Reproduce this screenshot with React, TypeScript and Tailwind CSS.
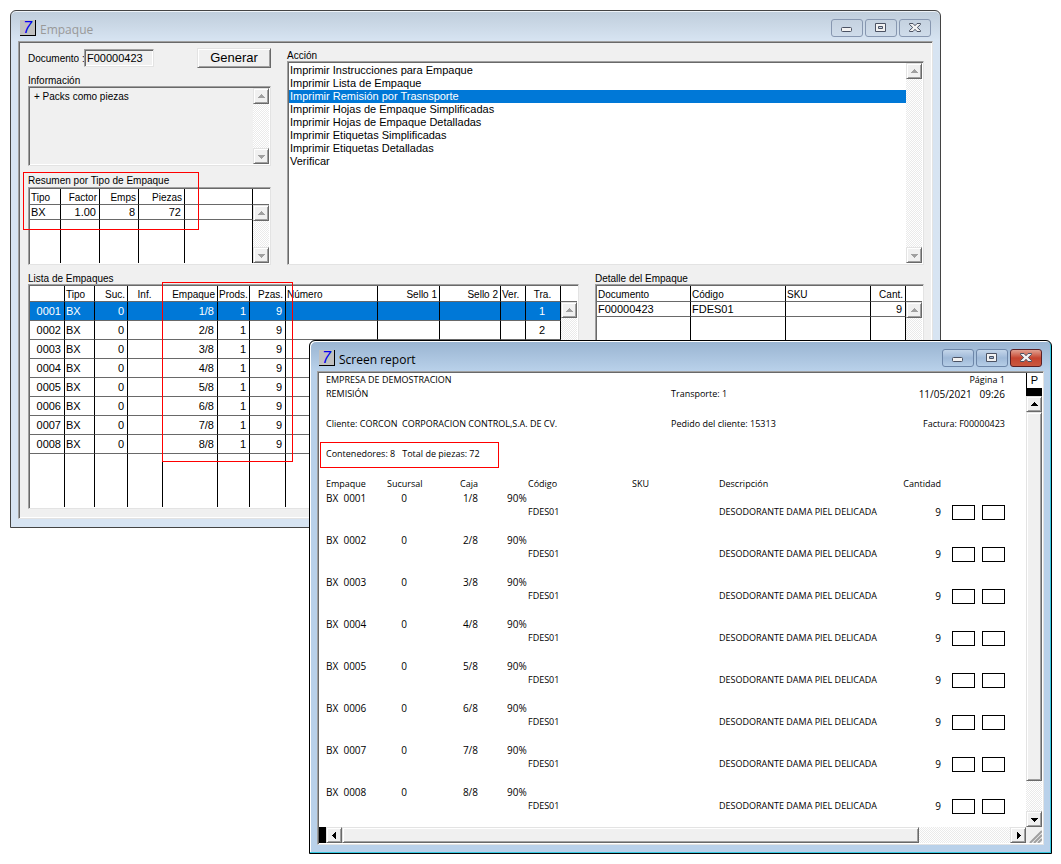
import type { ReactNode } from 'react'
import clsx from 'clsx'

const ACTIONS = [
  'Imprimir Instrucciones para Empaque',
  'Imprimir Lista de Empaque',
  'Imprimir Remisión por Trasnsporte',
  'Imprimir Hojas de Empaque Simplificadas',
  'Imprimir Hojas de Empaque Detalladas',
  'Imprimir Etiquetas Simplificadas',
  'Imprimir Etiquetas Detalladas',
  'Verificar',
]

const PACKS = [1, 2, 3, 4, 5, 6, 7, 8]

const SUNKEN =
  'border border-t-[#a0a0a0] border-l-[#a0a0a0] border-r-[#e3e3e3] border-b-[#e3e3e3] p-px shadow-[inset_1px_1px_#696969,inset_-1px_-1px_#ffffff]'
const RAISED =
  'border border-t-[#e3e3e3] border-l-[#e3e3e3] border-r-[#696969] border-b-[#696969] bg-[#f0f0f0] shadow-[inset_1px_1px_#ffffff,inset_-1px_-1px_#a0a0a0]'
const TRACK = 'bg-[repeating-conic-gradient(#ffffff_0_25%,#eaeaea_0_50%)] bg-[length:2px_2px]'

const ARROWS = {
  up: 'M4 9h7v-1h-1v-1h-1v-1h-1v-1h-1v1h-1v1h-1v1h-1z',
  down: 'M4 6h7v1h-1v1h-1v1h-1v1h-1v-1h-1v-1h-1v-1h-1z',
  left: 'M9 4v7h-1v-1h-1v-1h-1v-1h-1v-1h1v-1h1v-1h1v-1z',
  right: 'M6 4v7h1v-1h1v-1h1v-1h1v-1h-1v-1h-1v-1h-1v-1z',
}

function ArrowButton({ dir, disabled = false }: { dir: keyof typeof ARROWS; disabled?: boolean }) {
  return (
    <button
      type="button"
      aria-label={dir}
      disabled={disabled}
      className={clsx('flex size-4 shrink-0 items-center justify-center', RAISED)}
    >
      <svg
        viewBox="0 0 15 15"
        shapeRendering="crispEdges"
        className={clsx('size-[15px] shrink-0', disabled ? 'fill-[#a0a0a0]' : 'fill-black')}
      >
        <path d={ARROWS[dir]} />
      </svg>
    </button>
  )
}

function DisabledScroll() {
  return (
    <div className={clsx('flex h-full w-4 flex-col justify-between', TRACK)}>
      <ArrowButton dir="up" disabled />
      <ArrowButton dir="down" disabled />
    </div>
  )
}

function TitleButton({ kind, active }: { kind: 'min' | 'max' | 'close'; active: boolean }) {
  return (
    <button
      type="button"
      aria-label={kind}
      className={clsx(
        'flex h-[18px] w-8 items-start justify-center rounded-[3px] border pt-[2px]',
        active && kind === 'close'
          ? 'border-[#5b1f24] bg-linear-to-b from-[#e0a090] via-[#c5442f] to-[#c9583f]'
          : active
            ? 'border-[#6d86a8] bg-linear-to-b from-[#c4d6ea] via-[#9fb9d8] to-[#b5cde6]'
            : 'border-[#8797b0] bg-linear-to-b from-[#c5d2e0] to-[#cfdcea]',
      )}
    >
      <svg viewBox="0 0 14 12" className="h-3 w-[14px]" fill="#f2f2f2" stroke="#4b5263">
        {kind === 'min' && <rect x="1.5" y="5.5" width="10" height="4" rx="1" />}
        {kind === 'max' && <path fillRule="evenodd" d="M1.5 1.5h10v8h-10z M4.5 4.5h4v2h-4z" />}
        {kind === 'close' && (
          <path d="M1.5 1.5h3.5l2 2.2l2-2.2h3.5v1l-3.2 3l3.2 3v1h-3.5l-2-2.2l-2 2.2h-3.5v-1l3.2-3l-3.2-3z" />
        )}
      </svg>
    </button>
  )
}

type WindowProps = {
  title: string
  active?: boolean
  className: string
  children: ReactNode
}

function AppWindow({ title, active = false, className, children }: WindowProps) {
  return (
    <section
      className={clsx(
        'absolute rounded-t-md border px-[7px] pb-2',
        active
          ? 'border-black bg-[#b9d1ea] bg-linear-to-b from-[#99b4d1] from-0% to-[#b9d1ea] to-[30px] shadow-[inset_-1px_-1px_#35c8e0,inset_1px_1px_#ffffff]'
          : 'border-[#434343] bg-[#d7e4f2] bg-linear-to-b from-[#bfcddb] from-0% to-[#d7e4f2] to-[30px] shadow-[inset_0_1px_#eef3f8]',
        className,
      )}
    >
      <header className="flex h-[30px] items-center pt-1 pr-0.5 pl-0.5">
        <span className="flex size-4 items-center justify-center border-r border-b border-black bg-[#c0c0c0] font-['Liberation_Sans',sans-serif] text-base leading-4 text-[#0000f0] italic">
          7
        </span>
        <h1
          className={clsx(
            "ml-1 flex-1 pt-[3px] font-['Open_Sans',sans-serif] text-xs",
            active ? 'text-black' : 'text-[#999999]',
          )}
        >
          {title}
        </h1>
        <div className="flex gap-0.5">
          <TitleButton kind="min" active={active} />
          <TitleButton kind="max" active={active} />
          <TitleButton kind="close" active={active} />
        </div>
      </header>
      {children}
    </section>
  )
}

const HEAD =
  'h-4 border-r border-b border-r-black border-b-[#696969] pt-0.5 pr-0.5 pb-0 pl-px font-normal'
const CELL = 'border-r border-b border-r-black border-b-[#696969] py-0 pr-[3px] pl-px'
const FILL = 'border-r border-black'

function ResumenTable() {
  return (
    <table className="w-full table-fixed border-separate border-spacing-0 bg-white text-left leading-3">
      <colgroup>
        <col className="w-[31px]" />
        <col className="w-[39px]" />
        <col className="w-[39px]" />
        <col className="w-[46px]" />
        <col />
        <col className="w-4" />
      </colgroup>
      <thead className="text-[10px]">
        <tr>
          <th className={HEAD}>Tipo</th>
          <th className={clsx(HEAD, 'text-right')}>Factor</th>
          <th className={clsx(HEAD, 'text-right')}>Emps</th>
          <th className={clsx(HEAD, 'text-right')}>Piezas</th>
          <th className={HEAD} />
          <th className="border-b border-[#696969]" />
        </tr>
      </thead>
      <tbody className="text-[11px]">
        <tr className="h-[15px]">
          <td className={CELL}>BX</td>
          <td className={clsx(CELL, 'text-right')}>1.00</td>
          <td className={clsx(CELL, 'text-right')}>8</td>
          <td className={clsx(CELL, 'text-right')}>72</td>
          <td className={CELL} />
          <td rowSpan={2} className="p-0">
            <div className="h-[58px]">
              <DisabledScroll />
            </div>
          </td>
        </tr>
        <tr className="h-[43px]">
          <td className={FILL} />
          <td className={FILL} />
          <td className={FILL} />
          <td className={FILL} />
          <td className={FILL} />
        </tr>
      </tbody>
    </table>
  )
}

function ListaTable() {
  return (
    <table className="w-full table-fixed border-separate border-spacing-0 bg-white text-left leading-3">
      <colgroup>
        <col className="w-[35px]" />
        <col className="w-[30px]" />
        <col className="w-[33px]" />
        <col className="w-[35px]" />
        <col className="w-[55px]" />
        <col className="w-8" />
        <col className="w-9" />
        <col />
        <col className="w-[62px]" />
        <col className="w-[61px]" />
        <col className="w-[25px]" />
        <col className="w-[35px]" />
        <col className="w-4" />
      </colgroup>
      <thead className="text-[10px]">
        <tr>
          <th className={HEAD} />
          <th className={HEAD}>Tipo</th>
          <th className={clsx(HEAD, 'text-right')}>Suc.</th>
          <th className={clsx(HEAD, 'text-center')}>Inf.</th>
          <th className={clsx(HEAD, 'text-right')}>Empaque</th>
          <th className={HEAD}>Prods.</th>
          <th className={clsx(HEAD, 'text-right')}>Pzas.</th>
          <th className={HEAD}>Número</th>
          <th className={clsx(HEAD, 'text-right')}>Sello 1</th>
          <th className={clsx(HEAD, 'text-right')}>Sello 2</th>
          <th className={HEAD}>Ver.</th>
          <th className={clsx(HEAD, 'text-center')}>Tra.</th>
          <th className="border-b border-[#696969]" />
        </tr>
      </thead>
      <tbody className="text-[11px]">
        {PACKS.map((n) => (
          <tr key={n} className={clsx('h-[19px]', n === 1 && 'bg-[#0078d7] text-white')}>
            <td className={clsx(CELL, 'text-right')}>{`000${n}`}</td>
            <td className={CELL}>BX</td>
            <td className={clsx(CELL, 'text-right')}>0</td>
            <td className={CELL} />
            <td className={clsx(CELL, 'text-right')}>{n}/8</td>
            <td className={clsx(CELL, 'text-right')}>1</td>
            <td className={clsx(CELL, 'text-right')}>9</td>
            <td className={CELL} />
            <td className={CELL} />
            <td className={CELL} />
            <td className={CELL} />
            <td className={clsx(CELL, 'text-center')}>{n}</td>
            {n === 1 && (
              <td rowSpan={9} className="p-0">
                <div className="h-[205px]">
                  <DisabledScroll />
                </div>
              </td>
            )}
          </tr>
        ))}
        <tr className="h-[53px]">
          {Array.from({ length: 12 }, (_, i) => (
            <td key={i} className={FILL} />
          ))}
        </tr>
      </tbody>
    </table>
  )
}

function DetalleTable() {
  return (
    <table className="w-full table-fixed border-separate border-spacing-0 bg-white text-left leading-3">
      <colgroup>
        <col className="w-[94px]" />
        <col className="w-[95px]" />
        <col />
        <col className="w-[35px]" />
        <col className="w-4" />
      </colgroup>
      <thead className="text-[10px]">
        <tr>
          <th className={HEAD}>Documento</th>
          <th className={HEAD}>Código</th>
          <th className={HEAD}>SKU</th>
          <th className={clsx(HEAD, 'text-right')}>Cant.</th>
          <th className="border-b border-[#696969]" />
        </tr>
      </thead>
      <tbody className="text-[11px]">
        <tr className="h-[15px]">
          <td className={CELL}>F00000423</td>
          <td className={CELL}>FDES01</td>
          <td className={CELL} />
          <td className={clsx(CELL, 'text-right')}>9</td>
          <td rowSpan={2} className="p-0">
            <div className="h-[205px]">
              <DisabledScroll />
            </div>
          </td>
        </tr>
        <tr className="h-[190px]">
          <td className={FILL} />
          <td className={FILL} />
          <td className={FILL} />
          <td className={FILL} />
        </tr>
      </tbody>
    </table>
  )
}

function EmpaqueWindow() {
  return (
    <AppWindow title="Empaque" className="top-[10px] right-[120px] left-[10px]">
      <div className={clsx('bg-[#f0f0f0]', SUNKEN)}>
        <div className="pt-[5px] pr-[7px] pb-2 pl-2 font-['Liberation_Sans',sans-serif] text-[10px] leading-3 text-black">
          <div className="flex gap-4">
            <div className="w-[243px] shrink-0">
              <div className="flex h-5 items-center">
                <label htmlFor="documento" className="w-14 pt-px whitespace-nowrap">
                  Documento :
                </label>
                <input
                  id="documento"
                  defaultValue="F00000423"
                  className={clsx('h-[18px] w-[70px] bg-[#f0f0f0] pl-[2px] text-[11px]', SUNKEN)}
                />
                <button type="button" className={clsx('ml-auto h-5 w-[74px] text-[13px]', RAISED)}>
                  Generar
                </button>
              </div>
              <label htmlFor="info" className="mt-[6px] block pt-px leading-[11px]">
                Información
              </label>
              <div className={clsx('flex h-20', SUNKEN)}>
                <textarea
                  id="info"
                  readOnly
                  value="+ Packs como piezas"
                  className="block h-full min-w-0 flex-1 resize-none px-1 pt-[3px] leading-3"
                />
                <DisabledScroll />
              </div>
              <h2 className="mt-2 pt-px">Resumen por Tipo de Empaque</h2>
              <div className={SUNKEN}>
                <ResumenTable />
              </div>
            </div>
            <div className="flex min-w-0 flex-1 flex-col">
              <h2 className="pt-0.5 leading-[11px]">Acción</h2>
              <div className={clsx('flex flex-1 bg-white', SUNKEN)}>
                <ul className="flex-1 pt-px text-[11px]" role="listbox" aria-label="Acción">
                  {ACTIONS.map((action, i) => (
                    <li key={action} role="option" aria-selected={i === 2}>
                      <button
                        type="button"
                        className={clsx(
                          'block h-[13px] w-full px-px text-left leading-[13px]',
                          i === 2 && 'bg-[#0078d7] text-white',
                        )}
                      >
                        {action}
                      </button>
                    </li>
                  ))}
                </ul>
                <DisabledScroll />
              </div>
            </div>
          </div>
          <div className="mt-[7px] flex gap-4">
            <div className="min-w-0 flex-1">
              <h2 className="pt-px leading-[11px]">Lista de Empaques</h2>
              <div className={SUNKEN}>
                <ListaTable />
              </div>
            </div>
            <div className="w-[329px] shrink-0">
              <h2 className="pt-px leading-[11px]">Detalle del Empaque</h2>
              <div className={SUNKEN}>
                <DetalleTable />
              </div>
            </div>
          </div>
        </div>
      </div>
      <div className="pointer-events-none absolute top-[161px] left-3 h-[58px] w-[176px] border border-[#ff0000]" />
      <div className="pointer-events-none absolute top-[271px] left-[151px] h-[180px] w-[131px] border border-[#ff0000]" />
    </AppWindow>
  )
}

function ReportWindow() {
  return (
    <AppWindow title="Screen report" active className="top-[340px] right-[9px] left-[309px]">
      <div className={clsx('bg-white', SUNKEN)}>
        <div className="flex">
          <div className="min-w-0 flex-1 pr-[21px] pb-[13px] pl-[7px] font-['Open_Sans',sans-serif] text-[9px] leading-[14px] whitespace-pre text-black">
            <div className="grid grid-cols-[345px_1fr_auto]">
              <span>EMPRESA DE DEMOSTRACION</span>
              <span />
              <span className="text-right">Página 1</span>
              <span>REMISIÓN</span>
              <span>Transporte: 1</span>
              <span className="text-right text-[10px]">11/05/2021   09:26</span>
            </div>
            <div className="mt-4 grid grid-cols-[345px_1fr_auto]">
              <span>Cliente: CORCON  CORPORACION CONTROL,S.A. DE CV.</span>
              <span>Pedido del cliente: 15313</span>
              <span className="text-right">Factura: F00000423</span>
            </div>
            <p className="mt-4">Contenedores: 8   Total de piezas: 72</p>
            <table className="mt-4 w-full table-fixed border-separate border-spacing-0 text-left">
              <colgroup>
                <col className="w-[61px]" />
                <col className="w-[34px]" />
                <col className="w-[57px]" />
                <col className="w-[50px]" />
                <col className="w-[104px]" />
                <col className="w-[87px]" />
                <col />
                <col className="w-[60px]" />
                <col className="w-16" />
              </colgroup>
              <thead>
                <tr className="h-[14px] [&>th]:p-0 [&>th]:font-normal">
                  <th>Empaque</th>
                  <th className="text-center">Sucursal</th>
                  <th className="text-right">Caja</th>
                  <th />
                  <th>Código</th>
                  <th>SKU</th>
                  <th>Descripción</th>
                  <th className="text-right">Cantidad</th>
                  <th />
                </tr>
              </thead>
              {PACKS.map((n) => (
                <tbody key={n}>
                  <tr className="h-[14px] text-[10px] [&>td]:p-0">
                    <td>{`BX  000${n}`}</td>
                    <td className="text-center">0</td>
                    <td className="text-right">{n}/8</td>
                    <td>
                      <span className="ml-[29px]">90%</span>
                    </td>
                    <td colSpan={5} />
                  </tr>
                  <tr className={clsx('align-top [&>td]:p-0', n < 8 ? 'h-7' : 'h-[14px]')}>
                    <td colSpan={4} />
                    <td>FDES01</td>
                    <td />
                    <td>DESODORANTE DAMA PIEL DELICADA</td>
                    <td className="text-right text-[10px]">9</td>
                    <td>
                      <div className="flex justify-end gap-[7px]">
                        <span className="h-[15px] w-[23px] border border-black" />
                        <span className="h-[15px] w-[23px] border border-black" />
                      </div>
                    </td>
                  </tr>
                </tbody>
              ))}
            </table>
          </div>
          <div className={clsx('flex w-4 flex-col', TRACK)}>
            <button
              type="button"
              className="h-[15px] border-l border-black bg-white font-['Liberation_Sans',sans-serif] text-[11px] leading-[15px]"
            >
              P
            </button>
            <div className="h-2 bg-black" />
            <ArrowButton dir="up" />
            <div className={clsx('flex-1', RAISED)} />
            <div className="h-[30px]" />
            <ArrowButton dir="down" />
          </div>
        </div>
        <div className="flex h-4">
          <div className="w-[7px] bg-black" />
          <ArrowButton dir="left" />
          <div className={clsx('flex-1', RAISED)} />
          <div className={clsx('w-[91px]', TRACK)} />
          <ArrowButton dir="right" />
          <svg viewBox="0 0 16 16" className="size-4 bg-[#f0f0f0]" stroke="#a0a0a0" strokeWidth="2">
            <path d="M4 16L16 4M8 16L16 8M12 16L16 12" />
          </svg>
        </div>
      </div>
      <div className="pointer-events-none absolute top-[101px] left-[10px] h-[26px] w-[179px] border border-[#ff0000]" />
    </AppWindow>
  )
}

function App() {
  return (
    <main className="relative min-h-screen overflow-hidden bg-white">
      <EmpaqueWindow />
      <ReportWindow />
    </main>
  )
}

export default App
